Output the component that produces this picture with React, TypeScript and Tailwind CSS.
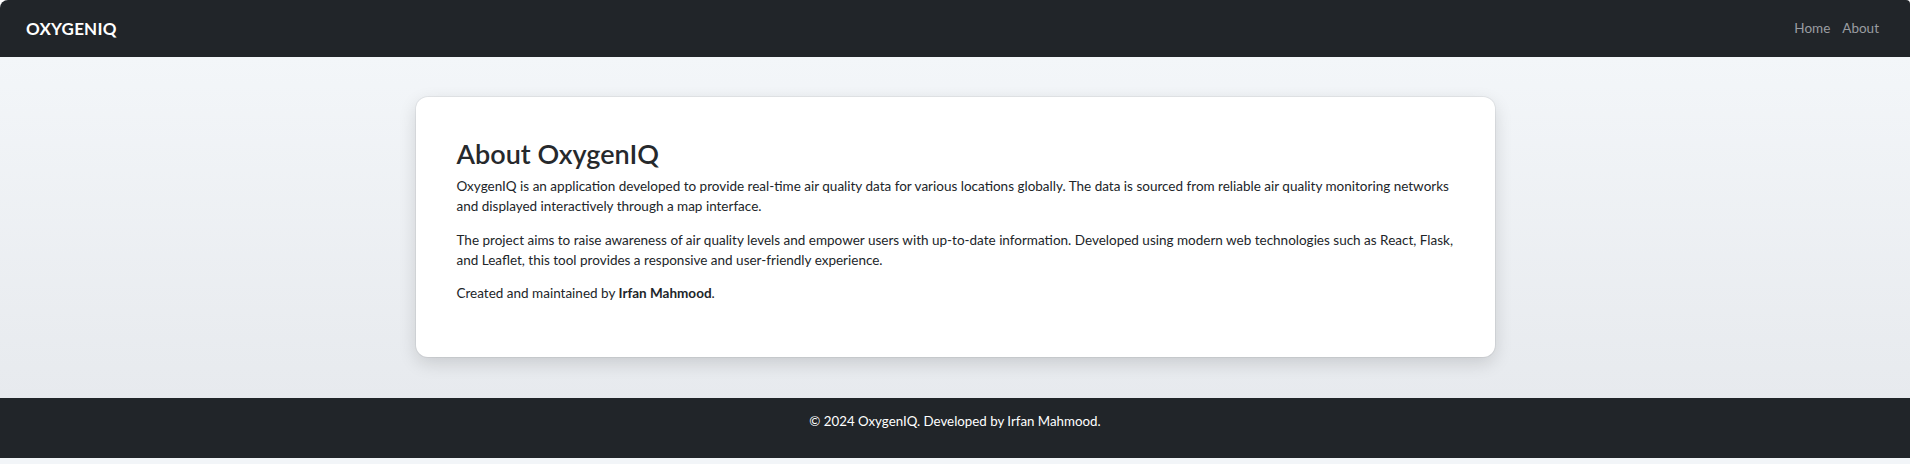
const sans = "font-['Lato','Noto_Sans',sans-serif]";

function Navbar() {
  return (
    <nav className="flex h-[57px] items-center justify-between rounded-tl-lg rounded-tr-sm bg-[#212529] pl-[26px] pr-[31px]">
      <a href="#" className="text-[17px] font-bold leading-tight tracking-[0.2px] text-white">
        OXYGENIQ
      </a>
      <div className="flex items-center gap-[12px] text-[13.5px] text-[#9a9da1]">
        <a href="#">Home</a>
        <a href="#">About</a>
      </div>
    </nav>
  );
}

function AboutCard() {
  return (
    <div className="mx-auto w-[1079px] rounded-xl bg-white pl-[41px] pr-[40px] pt-[41px] pb-[40px] text-[#212529] shadow-[0_0_0_1px_rgba(0,0,0,0.05),0_6px_18px_rgba(0,0,0,0.14)]">
      <h1 className="mb-[6px] text-[27px] font-semibold leading-[1.2] text-[#26292c]">About OxygenIQ</h1>
      <p className="mb-[13.5px] text-[13.5px] leading-[20px]">
        OxygenIQ is an application developed to provide real-time air quality data for various locations
        globally. The data is sourced from reliable air quality monitoring networks and displayed
        interactively through a map interface.
      </p>
      <p className="mb-[13.5px] text-[13.5px] leading-[20px]">
        The project aims to raise awareness of air quality levels and empower users with up-to-date
        information. Developed using modern web technologies such as React, Flask, and Leaflet, this tool
        provides a responsive and user-friendly experience.
      </p>
      <p className="mb-[13.5px] text-[13.5px] leading-[20px]">
        Created and maintained by <strong className="font-bold">Irfan Mahmood</strong>.
      </p>
    </div>
  );
}

export default function App() {
  return (
    <div className={`${sans} min-h-[464px] bg-[#f2f5f8]`}>
      <div className="bg-white">
        <Navbar />
      </div>
      <main className="bg-gradient-to-b from-[#f3f6f9] to-[#e7eaee] pt-[40px] pb-[41px]">
        <AboutCard />
      </main>
      <footer className="h-[60px] bg-[#212529] pt-[13px] text-center text-[13.3px] leading-[20px] text-white">
        <p>© 2024 OxygenIQ. Developed by Irfan Mahmood.</p>
      </footer>
    </div>
  );
}
